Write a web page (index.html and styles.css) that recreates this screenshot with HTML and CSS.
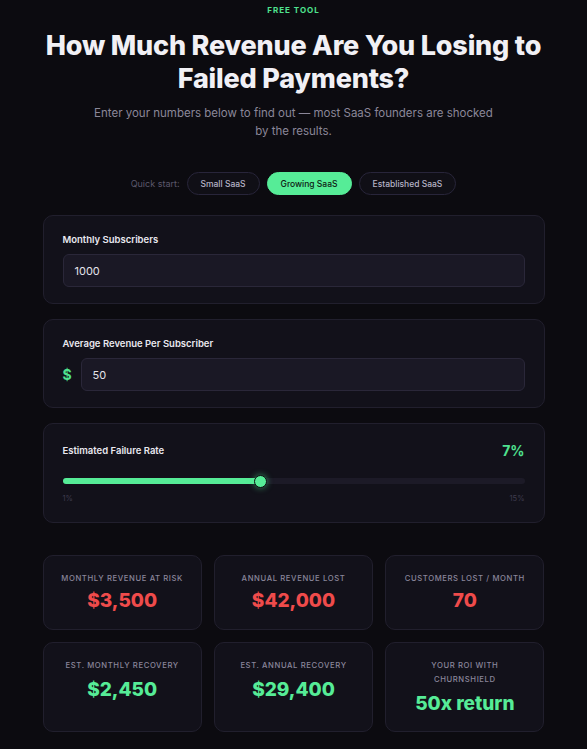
FILE: index.html
```html
<!DOCTYPE html>
<html lang="en">
<head>
<meta charset="utf-8">
<title>Failed Payments Calculator</title>
<link rel="stylesheet" href="styles.css">
</head>
<body>
<main class="page">
  <header class="hero">
    <div class="eyebrow">FREE TOOL</div>
    <h1 class="title">How Much Revenue Are You Losing to Failed Payments?</h1>
    <p class="subtitle">Enter your numbers below to find out — most SaaS founders are shocked by the results.</p>
  </header>

  <div class="presets">
    <span class="presets-label">Quick start:</span>
    <button class="pill">Small SaaS</button>
    <button class="pill pill-active">Growing SaaS</button>
    <button class="pill">Established SaaS</button>
  </div>

  <section class="card">
    <label class="field-label">Monthly Subscribers</label>
    <div class="input">1000</div>
  </section>

  <section class="card">
    <label class="field-label">Average Revenue Per Subscriber</label>
    <div class="input-row">
      <span class="currency">$</span>
      <div class="input">50</div>
    </div>
  </section>

  <section class="card card-slider">
    <div class="slider-head">
      <span class="field-label">Estimated Failure Rate</span>
      <span class="rate">7%</span>
    </div>
    <div class="track">
      <div class="fill" style="width: 42.86%"></div>
      <div class="thumb" style="left: 42.86%"></div>
    </div>
    <div class="range-labels"><span>1%</span><span>15%</span></div>
  </section>

  <section class="results">
    <div class="stat"><div class="stat-label">Monthly Revenue at Risk</div><div class="stat-value loss">$3,500</div></div>
    <div class="stat"><div class="stat-label">Annual Revenue Lost</div><div class="stat-value loss">$42,000</div></div>
    <div class="stat"><div class="stat-label">Customers Lost / Month</div><div class="stat-value loss">70</div></div>
    <div class="stat stat-tall"><div class="stat-label">Est. Monthly Recovery</div><div class="stat-value gain">$2,450</div></div>
    <div class="stat stat-tall"><div class="stat-label">Est. Annual Recovery</div><div class="stat-value gain">$29,400</div></div>
    <div class="stat stat-tall"><div class="stat-label stat-label-wrap">Your ROI with ChurnShield</div><div class="stat-value gain">50x return</div></div>
  </section>
</main>
</body>
</html>
```

FILE: styles.css
```css
* { box-sizing: border-box; }

html, body {
  margin: 0;
  padding: 0;
  background: #0c0b10;
  color: #f2f1f6;
  font-family: Inter, "Noto Sans", "Liberation Sans", sans-serif;
}

.page {
  width: 502px;
  margin: 0 auto;
  padding: 5px 0 40px;
}

.hero {
  text-align: center;
}

.eyebrow {
  color: #4fe28f;
  font-size: 8px;
  font-weight: 700;
  letter-spacing: 1px;
  line-height: 10px;
}

.title {
  margin: 14px -14px 0;
  font-size: 27px;
  line-height: 33px;
  font-weight: 800;
  letter-spacing: -0.2px;
  color: #f1f0f5;
}

.subtitle {
  margin: 9px auto 0;
  width: 400px;
  font-size: 11.5px;
  line-height: 18px;
  color: #8b8799;
}

.presets {
  display: flex;
  justify-content: center;
  align-items: center;
  gap: 7px;
  margin-top: 32px;
}

.presets-label {
  font-size: 9px;
  color: #5c586c;
  margin-right: 0;
}

.pill {
  height: 23px;
  padding: 0 13px;
  border-radius: 12px;
  border: 1px solid #28253a;
  background: #100f16;
  color: #b6b3c6;
  font-family: inherit;
  font-size: 8.5px;
  font-weight: 500;
}

.pill-active {
  background: #56ec97;
  border-color: #56ec97;
  color: #0e1a13;
}

.card {
  margin-top: 15px;
  background: #12111a;
  border: 1px solid #211f2d;
  border-radius: 10px;
  padding: 18px 19px 16px;
}

.presets + .card { margin-top: 20px; }

.field-label {
  display: block;
  font-size: 9.5px;
  line-height: 12px;
  font-weight: 600;
  color: #e9e8ef;
}

.input {
  margin-top: 8px;
  height: 33px;
  background: #1a1825;
  border: 1px solid #2a2739;
  border-radius: 6px;
  padding: 0 11px;
  display: flex;
  align-items: center;
  font-size: 11px;
  color: #e4e3ea;
  flex: 1;
}

.input-row {
  display: flex;
  align-items: center;
  gap: 8px;
  margin-top: 8px;
}

.input-row .input { margin-top: 0; }

.currency {
  width: 10px;
  color: #4fe28f;
  font-weight: 700;
  font-size: 14px;
}

.card-slider {
  padding-top: 20px;
  padding-bottom: 19px;
}

.slider-head {
  display: flex;
  justify-content: space-between;
  align-items: center;
}

.rate {
  color: #4fe28f;
  font-weight: 700;
  font-size: 14px;
  line-height: 14px;
}

.track {
  position: relative;
  margin-top: 20px;
  height: 6px;
  background: #1c1a27;
  border-radius: 3px;
}

.fill {
  height: 100%;
  background: #56ec97;
  border-radius: 3px;
}

.thumb {
  position: absolute;
  top: 50%;
  width: 13px;
  height: 13px;
  margin: -6.5px 0 0 -6.5px;
  border-radius: 50%;
  background: #56ec97;
  border: 1px solid #0c0b10;
  box-shadow: 0 0 6px rgba(86, 236, 151, 0.55);
}

.range-labels {
  display: flex;
  justify-content: space-between;
  margin-top: 10px;
  font-size: 7.5px;
  color: #3f3c4e;
}

.results {
  display: grid;
  grid-template-columns: repeat(3, 1fr);
  gap: 12px 12px;
  margin-top: 32px;
}

.stat {
  height: 75px;
  background: #12111a;
  border: 1px solid #211f2d;
  border-radius: 10px;
  text-align: center;
  padding: 16px 8px 0;
}

.stat-tall {
  height: 90px;
  padding-top: 16px;
}

.stat-label {
  font-size: 7.7px;
  line-height: 14px;
  letter-spacing: 0.6px;
  text-transform: uppercase;
  color: #8a869a;
  font-weight: 500;
}

.stat-label-wrap {
  padding: 0 28px;
}

.stat-value {
  margin-top: 3px;
  font-size: 19px;
  line-height: 24px;
  font-weight: 800;
}

.stat-tall .stat-value { margin-top: 5px; }

.loss { color: #ef4b4b; }
.gain { color: #56ec97; }
```
